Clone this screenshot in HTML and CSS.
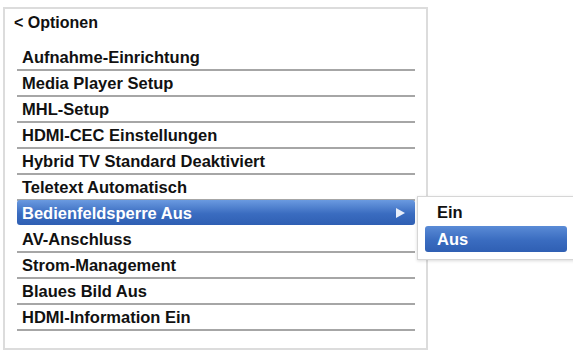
FILE: index.html
```html
<!DOCTYPE html>
<html lang="de">
<head>
    <meta charset="UTF-8">
    <meta name="viewport" content="width=device-width, initial-scale=1.0">
    <title>Optionen</title>
    <link rel="stylesheet" href="styles.css">
</head>
<body>

<div class="panel">
    <div class="title">&lt; Optionen</div>
    <ul class="menu">
        <li>Aufnahme-Einrichtung</li>
        <li>Media Player Setup</li>
        <li>MHL-Setup</li>
        <li>HDMI-CEC Einstellungen</li>
        <li>Hybrid TV Standard Deaktiviert</li>
        <li>Teletext Automatisch</li>
        <li class="active">Bedienfeldsperre Aus <span class="arrow"></span></li>
        <li>AV-Anschluss</li>
        <li>Strom-Management</li>
        <li>Blaues Bild Aus</li>
        <li>HDMI-Information Ein</li>
    </ul>
</div>

<div class="submenu">
    <div class="option">Ein</div>
    <div class="option selected">Aus</div>
</div>

</body>
</html>
```

FILE: styles.css
```css
body {
    font-family: "Liberation Sans", Arial, sans-serif;
    font-weight: bold;
    color: #111;
    background: #fff;
    margin: 0;
}
.panel {
    margin: 7px 0 0 3px;
    width: 421px;
    height: 339px;
    border: 2px solid #dcdcdc;
}
.title {
    font-size: 16px;
    padding: 5px 0 0 9px;
    height: 31px;
}
.menu {
    list-style: none;
    margin: 0 11px 0 12px;
    padding: 0;
}
.menu li {
    height: 24px;
    line-height: 24px;
    font-size: 16.5px;
    padding-left: 5px;
    border-bottom: 2px solid #a6a6a6;
}
.menu li.active {
    display: flex;
    justify-content: space-between;
    align-items: center;
    height: 25px;
    margin-top: -1px;
    margin-bottom: 2px;
    border-bottom: none;
    border-radius: 3px;
    color: #fff;
    background: linear-gradient(#6a9ae0, #3a6cc0 55%, #2f5fb3);
}
.arrow {
    width: 0;
    height: 0;
    margin-right: 10px;
    border-left: 9px solid #e8eefa;
    border-top: 5px solid transparent;
    border-bottom: 5px solid transparent;
}
.submenu {
    position: absolute;
    left: 417px;
    top: 196px;
    width: 170px;
    height: 60px;
    padding: 2px 0 0 7px;
    background: #fff;
    border: 1px solid #d6d6d6;
    box-shadow: 0 1px 3px rgba(0, 0, 0, 0.15);
}
.option {
    height: 26px;
    line-height: 26px;
    font-size: 16.5px;
    padding-left: 12px;
}
.option.selected {
    width: 130px;
    margin-top: 1px;
    border-radius: 3px;
    color: #fff;
    background: linear-gradient(#5a8bd6, #3a6cc0 55%, #2f5fb3);
}
```
